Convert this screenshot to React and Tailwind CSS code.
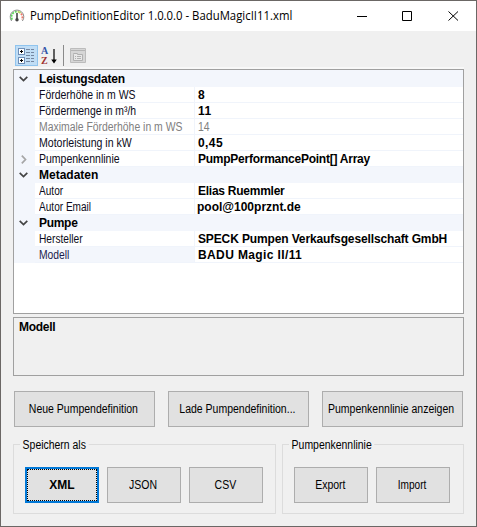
import React from "react";

const rows = [
  { cat: true, label: "Leistungsdaten", ls: "tracking-[-0.2px]" },
  { label: "Förderhöhe in m WS", ls: "scale-x-[0.872]", value: "8", vs: "" },
  { label: "Fördermenge in m³/h", ls: "scale-x-[0.867]", value: "11", vs: "tracking-[0.6px]" },
  { label: "Maximale Förderhöhe in m WS", ls: "scale-x-[0.867]", value: "14", vs: "inline-block origin-left scale-x-[0.87]", muted: true },
  { label: "Motorleistung in kW", ls: "scale-x-[0.88]", value: "0,45", vs: "tracking-[0.4px]" },
  { label: "Pumpenkennlinie", ls: "scale-x-[0.875]", value: "PumpPerformancePoint[] Array", vs: "tracking-[-0.25px]", expand: true },
  { cat: true, label: "Metadaten", ls: "" },
  { label: "Autor", ls: "scale-x-[0.84]", value: "Elias Ruemmler", vs: "tracking-[-0.25px]" },
  { label: "Autor Email", ls: "scale-x-[0.84]", value: "pool@100prznt.de", vs: "-ml-px" },
  { cat: true, label: "Pumpe", ls: "tracking-[-0.3px]" },
  { label: "Hersteller", ls: "scale-x-[0.85]", value: "SPECK Pumpen Verkaufsgesellschaft GmbH", vs: "tracking-[-0.13px]" },
  { label: "Modell", ls: "scale-x-[0.86]", value: "BADU Magic II/11", vs: "tracking-[0.38px]", selected: true },
];

function Row({ r }) {
  if (r.cat) {
    return (
      <div className="flex h-4 items-center bg-[#f3f6fc]">
        <div className="flex w-[25px] shrink-0 pl-[5px]">
          <svg width="9" height="6" viewBox="0 0 9 6" fill="none" stroke="#444" strokeWidth="1.7"><path d="M.7.8 4.5 4.5 8.3.8" /></svg>
        </div>
        <span className={`text-[12px] font-bold leading-4 ${r.ls}`}>{r.label}</span>
      </div>
    );
  }
  return (
    <div className="flex h-4 leading-[17px]">
      <div className="flex w-[21px] shrink-0 items-center bg-[#f3f6fc] pl-[7px]">
        {r.expand && (
          <svg width="6" height="9" viewBox="0 0 6 9" fill="none" stroke="#a6a6a6" strokeWidth="1.7"><path d="M.8.7 4.5 4.5.8 8.3" /></svg>
        )}
      </div>
      <div className={`w-[160px] shrink-0 border-b border-r border-[#f0f4fb] pl-1 ${r.selected ? "bg-[#f3f6fc] text-[#1c1c4c]" : r.muted ? "text-[#808080]" : "text-[#0c0c20]"}`}>
        <span className={`inline-block origin-left ${r.ls}`}>{r.label}</span>
      </div>
      <div className={`grow border-b border-[#f0f4fb] pl-[3px] ${r.muted ? "text-[#808080]" : "text-[12px] font-bold"}`}>
        <span className={r.vs}>{r.value}</span>
      </div>
    </div>
  );
}

function Btn({ children, w, ls = "scale-x-[0.875]" }) {
  return (
    <button className={`flex h-9 items-center justify-center border border-[#adadad] bg-[#e1e1e1] pr-[2px] ${w}`}>
      <span className={`inline-block ${ls}`}>{children}</span>
    </button>
  );
}

function Group({ title, w, children }) {
  return (
    <div className={`relative flex h-[70px] gap-2 border border-[#dcdcdc] pl-[11px] pt-[22px] ${w}`}>
      <span className="absolute -top-[7px] left-[6px] origin-left scale-x-[0.87] bg-[#f0f0f0] px-[3px] leading-[14px]">{title}</span>
      {children}
    </div>
  );
}

export default function App() {
  return (
    <div className="flex h-[527px] w-[477px] flex-col overflow-hidden whitespace-nowrap border border-[#6b6765] bg-[#f0f0f0] font-['Liberation_Sans',Arial,sans-serif] text-[12px] text-black">
      <header className="flex h-[30px] shrink-0 items-center bg-white pl-2">
        <svg width="16" height="16" viewBox="0 0 16 16" fill="none">
          <path d="M2.6 13A6.8 6.8 0 1 1 13.4 13" stroke="#8a8a8a" strokeWidth="1" />
          <path d="M3.2 11.6A5.3 5.3 0 0 1 8 3.6" stroke="#5fd35f" strokeWidth="1.8" strokeDasharray="2 1" />
          <path d="M8.6 3.6A5.3 5.3 0 0 1 11.6 5" stroke="#b8d860" strokeWidth="1.8" />
          <path d="M12 5.6A5.3 5.3 0 0 1 12.8 11.6" stroke="#ee7a6a" strokeWidth="1.8" strokeDasharray="2 1" />
          <path d="M8 5v7" stroke="#444" strokeWidth="1.6" />
          <circle cx="8" cy="11.8" r="1.7" fill="#444" />
        </svg>
        <span className="ml-[5px] origin-left scale-x-[0.946] font-['Open_Sans','Noto_Sans',sans-serif] text-[12px]">PumpDefinitionEditor 1.0.0.0 - BaduMagicII11.xml</span>
        <svg className="ml-auto mr-[17px] shrink-0" width="102" height="10" viewBox="0 0 102 10" fill="none" stroke="#000">
          <path d="M0 5.5h10M45.5.5h9v9h-9zM91.5.5l9.5 9M101 .5l-9.5 9" />
        </svg>
      </header>
      <div className="mt-[14px] flex h-[21px] shrink-0 items-center pl-[14px]">
        <div className="flex h-[21px] w-[23px] items-center justify-center border border-[#90c4ee] bg-[#c0ddf5]">
          <svg width="17" height="17" viewBox="0 0 17 17" fill="none" shapeRendering="crispEdges">
            <rect x=".5" y="1.5" width="6" height="6" rx="1" fill="#fff" stroke="#6f8fb8" />
            <rect x=".5" y="10.5" width="6" height="6" rx="1" fill="#fff" stroke="#6f8fb8" />
            <path d="M2 4.5h3M3.5 3v3M2 13.5h3M3.5 12v3" stroke="#000" />
            <path d="M8 2.5h4M8 5.5h4M8 8.5h4M8 11.5h4M8 14.5h4M13 2.5h3M13 5.5h3M13 8.5h3M13 11.5h3M13 14.5h3" stroke="#7486a0" />
          </svg>
        </div>
        <div className="ml-[3px] flex w-[9px] flex-col font-['Liberation_Serif',serif] text-[10px] font-bold leading-[10px]">
          <span className="text-[#3355a8]">A</span>
          <span className="text-[#a03030]">Z</span>
        </div>
        <svg className="ml-px" width="6" height="16" viewBox="0 0 6 16"><path d="M2.4 1h1.2v10.5H5.8L3 15.5.2 11.5h2.2z" /></svg>
        <div className="ml-[6px] h-[21px] w-px bg-[#8a8a8a]" />
        <svg className="ml-[6px]" width="17" height="16" viewBox="0 0 17 16" fill="none">
          <path d="M.5.5h15v14H.5z" fill="#d6d6d6" stroke="#bcbcbc" />
          <path d="M1 2.5h14" stroke="#b4b4b4" />
          <path d="M3.5 6.5v-1h4v1h5v6h-9z" fill="#e8e8e8" stroke="#b0b0b0" />
          <path d="M5 8.5h1M7 8.5h4M5 10.5h1M7 10.5h4" stroke="#b0b0b0" />
        </svg>
      </div>
      <div className="ml-3 mt-[1px] h-[2px] w-[451px] shrink-0 bg-[#f8f8f8]" />
      <main className="flex w-[463px] shrink-0 flex-col pl-3">
        <div className="h-[245px] border border-[#a0a0a0] bg-white">
          <div className="h-px bg-[#f3f6fc]" />
          {rows.map((r, i) => <Row key={i} r={r} />)}
        </div>
        <div className="mt-[3px] h-[59px] border border-[#a0a0a0] pl-[5px] pt-[1px] font-bold leading-4 tracking-[-0.3px]">Modell</div>
      </main>
      <div className="mt-[15px] flex shrink-0 gap-[13px] pl-[13px]">
        <Btn w="w-[141px]">Neue Pumpendefinition</Btn>
        <Btn w="w-[141px]">Lade Pumpendefinition...</Btn>
        <Btn w="w-[141px]">Pumpenkennlinie anzeigen</Btn>
      </div>
      <div className="mt-[17px] flex shrink-0 gap-[6px] pl-3">
        <Group title="Speichern als" w="w-[263px]">
          <button className="h-9 w-[74px] border-2 border-[#0078d7] bg-[#e1e1e1] font-bold">
            <span className="flex h-full items-center justify-center border border-dotted border-black">XML</span>
          </button>
          <Btn w="w-[74px]">JSON</Btn>
          <Btn w="w-[74px]">CSV</Btn>
        </Group>
        <Group title="Pumpenkennlinie" w="w-[182px]">
          <Btn w="w-[74px]">Export</Btn>
          <Btn w="w-[74px]" ls="scale-x-[0.84]">Import</Btn>
        </Group>
      </div>
    </div>
  );
}
